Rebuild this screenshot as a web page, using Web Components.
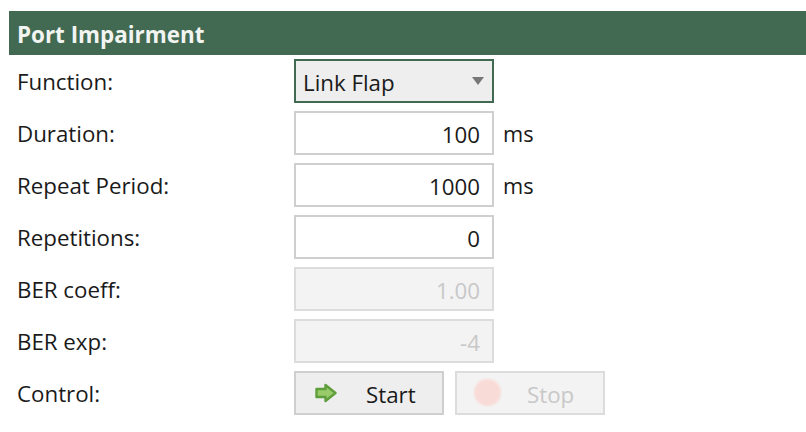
<!DOCTYPE html>
<html>
<head>
<title>Port Impairment</title>
<style>
html,body{margin:0;background:#fff;overflow:hidden;}
body{font-family:"Open Sans","Noto Sans",sans-serif;font-size:22.3px;color:#1a1a1a;}
.unit{font-size:21.8px;}
</style>
</head>
<body>
<template id="port-panel">
<style>
:host{display:block;padding:11px 0 0 9px;}
#title{background:#426a53;color:#f2f4f2;font-weight:700;font-size:22.4px;height:44px;line-height:48px;padding-left:8px;}
#rows{display:flex;flex-direction:column;gap:8px;margin-top:4px;}
</style>
<div id="title"><slot name="title"></slot></div>
<div id="rows"><slot></slot></div>
</template>

<template id="form-row">
<style>
:host{display:grid;grid-template-columns:277px auto;height:44px;padding-left:8px;align-items:center;}
#label{line-height:44px;position:relative;top:1px;}
#right{display:flex;align-items:center;gap:9px;}
</style>
<div id="label"></div>
<div id="right"><slot></slot></div>
</template>

<template id="num-box">
<style>
:host{display:flex;box-sizing:border-box;width:200px;height:44px;border:2px solid #cfcfcf;background:#fff;color:#1a1a1a;align-items:center;justify-content:flex-end;padding:2px 12px 0 0;}
:host([disabled]){background:#f3f3f3;border-color:#dcdcdc;color:#c8c8c8;}
</style>
<slot></slot>
</template>

<template id="drop-down">
<style>
:host{display:flex;box-sizing:border-box;width:200px;height:44px;border:2px solid #426a53;background:#eeeeee;align-items:center;justify-content:space-between;padding:2px 8px 0 7px;}
svg{display:block;margin-top:-3px;}
</style>
<slot></slot>
<svg width="12" height="8" viewBox="0 0 12 8"><path d="M0 0H12L6 8Z" fill="#777"/></svg>
</template>

<template id="tool-button">
<style>
:host{display:flex;box-sizing:border-box;width:150px;height:44px;border:2px solid #cfcfcf;background:#eeeeee;align-items:center;position:relative;padding-top:3px;}
:host([disabled]){background:#f3f3f3;border-color:#dcdcdc;color:#c8c8c8;}
#icon{width:70px;padding-left:var(--icon-left,19px);box-sizing:border-box;display:flex;margin-top:-4px;}
</style>
<div id="icon"><slot name="icon"></slot></div>
<slot></slot>
</template>

<port-panel>
  <span slot="title">Port Impairment</span>
  <form-row label="Function:"><drop-down>Link Flap</drop-down></form-row>
  <form-row label="Duration:"><num-box>100</num-box><span class="unit">ms</span></form-row>
  <form-row label="Repeat Period:"><num-box>1000</num-box><span class="unit">ms</span></form-row>
  <form-row label="Repetitions:"><num-box>0</num-box></form-row>
  <form-row label="BER coeff:"><num-box disabled>1.00</num-box></form-row>
  <form-row label="BER exp:"><num-box disabled>-4</num-box></form-row>
  <form-row label="Control:">
    <tool-button>
      <svg slot="icon" width="22" height="20" viewBox="0 0 22 20"><path d="M1.5 6H10.5V2L20.5 10L10.5 18V14H1.5Z" fill="#9acb6b" stroke="#5f9e3c" stroke-width="2.4" stroke-linejoin="round"/></svg>
      Start
    </tool-button>
    <tool-button disabled style="margin-left:2px;--icon-left:16px">
      <svg slot="icon" width="29" height="29" viewBox="0 0 29 29"><circle cx="14.5" cy="14.5" r="13.5" fill="#f8dbd6" style="filter:blur(1px)"/></svg>
      Stop
    </tool-button>
  </form-row>
</port-panel>

<script>
function simple(name){
  customElements.define(name,class extends HTMLElement{
    constructor(){
      super();
      const root=this.attachShadow({mode:"open"});
      root.appendChild(document.querySelector("#"+name).content.cloneNode(true));
    }
  });
}
simple("port-panel");
simple("num-box");
simple("drop-down");
simple("tool-button");
customElements.define("form-row",class extends HTMLElement{
  constructor(){
    super();
    const root=this.attachShadow({mode:"open"});
    root.appendChild(document.querySelector("#form-row").content.cloneNode(true));
  }
  connectedCallback(){
    this.shadowRoot.querySelector("#label").textContent=this.getAttribute("label");
  }
});
</script>
</body>
</html>
